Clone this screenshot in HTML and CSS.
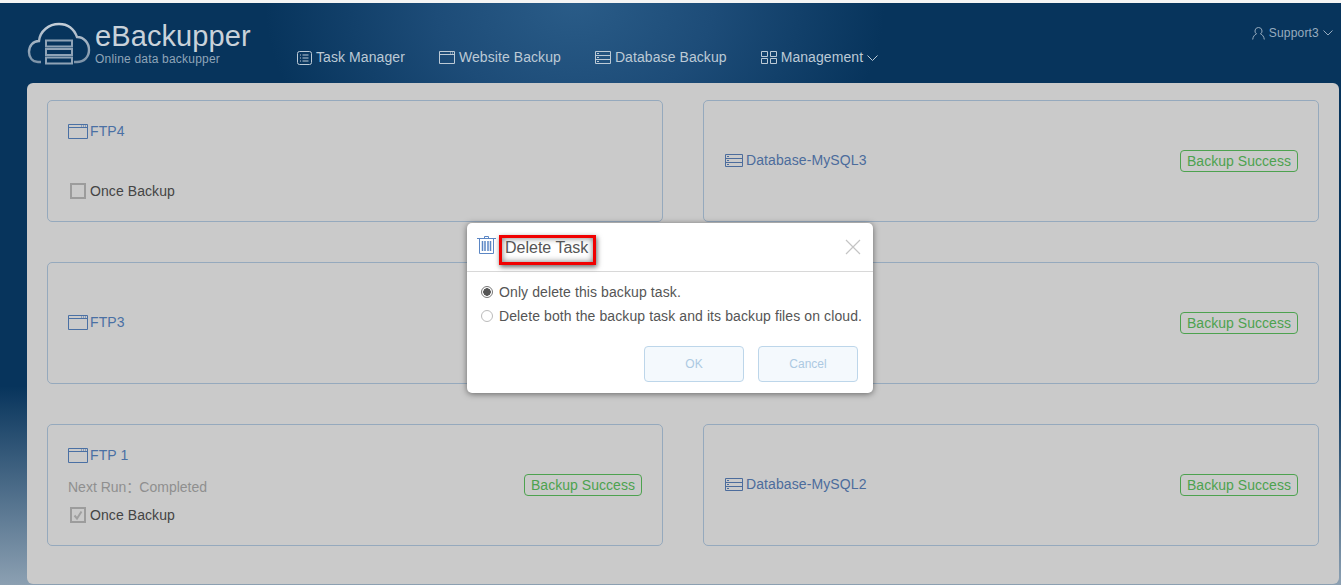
FILE: index.html
```
<!DOCTYPE html>
<html lang="en">
<head>
    <meta charset="UTF-8">
    <title>eBackupper</title>
    <link rel="stylesheet" href="styles.css">
</head>
<body>
    <svg class="sprites" width="0" height="0">
        <symbol id="i-site" viewBox="0 0 20 15">
            <path d="M.5.5h19v14H.5zM.5 3.500h19M13 2h1M15 2h1M17 2h1" fill="none" stroke="currentColor"/>
        </symbol>
        <symbol id="i-db" viewBox="0 0 18 13">
            <path d="M.5.5h17v12H.5zM.5 4.500h17M.5 8.500h17M2 2.500h2M2 6.500h2M2 10.500h2" fill="none" stroke="currentColor"/>
        </symbol>
    </svg>

    <header class="topbar">
        <div class="logo">
            <svg class="logo-icon" width="64" height="44" viewBox="0 0 64 44">
                <defs>
                    <linearGradient id="cloud" x1="0" y1="0" x2="0" y2="1">
                        <stop offset="0" stop-color="#c4ced8"/>
                        <stop offset="1" stop-color="#7d93a8"/>
                    </linearGradient>
                </defs>
                <path d="M14 40H11C5 40 2 35 2 30C2 24 6 19 12 19C13 9 22 2 32 2C41 2 47 7 50 15C57 15 62 21 62 28C62 35 57 40 50 40H47" fill="none" stroke="url(#cloud)" stroke-width="2.4"/>
                <path d="M19 18.500h26v6H19zM19 27h26v6H19zM19 35.500h26v6H19z" fill="none" stroke="#8fa3b6" stroke-width="2"/>
            </svg>
            <div class="logo-text">
                <div class="logo-name">eBackupper</div>
                <div class="logo-sub">Online data backupper</div>
            </div>
        </div>
        <nav class="nav">
            <a class="nav-item">
                <svg width="15" height="14" viewBox="0 0 15 14"><path d="M2.500.5h10a2 2 0 0 1 2 2v9a2 2 0 0 1-2 2h-10a2 2 0 0 1-2-2v-9a2 2 0 0 1 2-2zM3 4h1M3 7h1M3 10h1M5.500 4h6M5.500 7h6M5.500 10h6" fill="none" stroke="currentColor"/></svg>
                Task Manager
            </a>
            <a class="nav-item">
                <svg width="16" height="13" viewBox="0 0 16 13"><path d="M.5.5h15v12H.5zM.5 3.500h15M11 2h1M13 2h1" fill="none" stroke="currentColor"/></svg>
                Website Backup
            </a>
            <a class="nav-item">
                <svg width="16" height="13" viewBox="0 0 16 13"><path d="M.5.5h15v12H.5zM.5 4.500h15M.5 8.500h15M2 2.500h2M2 6.500h2M2 10.500h2" fill="none" stroke="currentColor"/></svg>
                Database Backup
            </a>
            <a class="nav-item">
                <svg width="16" height="13" viewBox="0 0 16 13"><path d="M.5.5h6v5h-6zM9.500.5h6v5h-6zM.5 7.500h6v5h-6zM9.500 7.500h6v5h-6z" fill="none" stroke="currentColor"/></svg>
                Management
                <svg class="chev" width="11" height="6" viewBox="0 0 11 6"><path d="M.5.5l5 5 5-5" fill="none" stroke="currentColor"/></svg>
            </a>
        </nav>
        <div class="user">
            <svg width="13" height="13" viewBox="0 0 13 13"><path d="M6.500.5a3.500 3.500 0 0 1 2 6.400c2 .7 3.500 2.800 3.800 5.600M6.500.5a3.500 3.500 0 0 0-2 6.400C2.500 7.600 1 9.700.7 12.500" fill="none" stroke="currentColor"/></svg>
            Support3
            <svg class="chev" width="10" height="6" viewBox="0 0 10 6"><path d="M.5.5L5 5 9.500.5" fill="none" stroke="currentColor"/></svg>
        </div>
    </header>

    <main class="panel">
        <section class="card">
            <div class="card-title"><svg width="20" height="15"><use href="#i-site"/></svg>FTP4</div>
            <div class="card-spacer"></div>
            <label class="once"><span class="check"></span>Once Backup</label>
        </section>
        <section class="card card-row">
            <div class="card-title title-db"><svg width="18" height="13"><use href="#i-db"/></svg>Database-MySQL3</div>
            <span class="status">Backup Success</span>
        </section>

        <section class="card card-row">
            <div class="card-title"><svg width="20" height="15"><use href="#i-site"/></svg>FTP3</div>
        </section>
        <section class="card card-row card-end">
            <span class="status">Backup Success</span>
        </section>

        <section class="card">
            <div class="card-title"><svg width="20" height="15"><use href="#i-site"/></svg>FTP 1</div>
            <div class="next-run">Next Run：<span class="next-val">Completed</span></div>
            <label class="once"><span class="check"><svg width="12" height="12" viewBox="0 0 12 12"><path d="M2.500 6.500l2.500 3 4.500-7" fill="none" stroke="#a0a0a0" stroke-width="2"/></svg></span>Once Backup</label>
            <span class="status status-over">Backup Success</span>
        </section>
        <section class="card card-row">
            <div class="card-title title-db"><svg width="18" height="13"><use href="#i-db"/></svg>Database-MySQL2</div>
            <span class="status">Backup Success</span>
        </section>
    </main>

    <div class="modal">
        <div class="modal-head">
            <svg class="trash" width="19" height="18" viewBox="0 0 19 18"><path d="M0 2.500h19M7.500 2V.5h4V2M2.500 3v14.500h14V3" fill="none" stroke="#5b86c4"/><path d="M5.500 5v10M8 5v10M11 5v10M13.500 5v10" fill="none" stroke="#5b86c4" stroke-width="1.500"/></svg>
            <span class="modal-title">Delete Task</span>
            <svg class="close" width="16" height="16" viewBox="0 0 16 16"><path d="M1 1l14 14M15 1L1 15" fill="none" stroke="#c4c4c4" stroke-width="1.200"/></svg>
        </div>
        <div class="modal-body">
            <label class="radio-row"><span class="radio radio-on"></span>Only delete this backup task.</label>
            <label class="radio-row"><span class="radio"></span>Delete both the backup task and its backup files on cloud.</label>
        </div>
        <div class="modal-foot">
            <button class="btn">OK</button>
            <button class="btn">Cancel</button>
        </div>
    </div>
</body>
</html>
```

FILE: styles.css
```
* {
    box-sizing: border-box;
}

html, body {
    height: 100%;
}

body {
    margin: 0;
    height: 585px;
    overflow: hidden;
    position: relative;
    border-top: 3px solid #f4f4f4;
    font-family: 'Liberation Sans', Arial, 'Noto Sans CJK SC', sans-serif;
    font-size: 14px;
    background-color: #07345c;
    background-image:
        radial-gradient(ellipse 310px 240px at 575px 0, #2a5c88 0%, #1d4c78 45%, rgba(7, 52, 92, 0) 100%),
        linear-gradient(to bottom, rgba(140, 160, 178, 0) 66%, #8ca0b2 100%);
}

.sprites {
    position: absolute;
}

/* top bar */
.topbar {
    height: 80px;
    margin: 0 2px 0 27px;
    display: flex;
    position: relative;
}

.logo {
    display: flex;
    padding-top: 17px;
    width: 270px;
}

.logo-icon {
    margin-top: 2px;
    margin-right: 4px;
}

.logo-name {
    font-size: 29px;
    line-height: 32px;
    letter-spacing: 0.1px;
    color: #c9d2da;
}

.logo-sub {
    font-size: 12px;
    line-height: 13px;
    margin-top: 1px;
    letter-spacing: 0.2px;
    color: #8fa5b9;
}

.nav {
    display: flex;
    gap: 34px;
    padding-top: 46px;
}

.nav-item {
    display: flex;
    align-items: flex-start;
    gap: 4px;
    font-size: 14px;
    line-height: 16px;
    letter-spacing: 0.08px;
    color: #bccad6;
    white-space: nowrap;
}

.nav-item svg {
    margin-top: 2px;
}

.nav-item .chev {
    margin-top: 6px;
}

.user {
    position: absolute;
    right: 6px;
    top: 23px;
    display: flex;
    align-items: center;
    gap: 4px;
    font-size: 12px;
    line-height: 14px;
    letter-spacing: 0.2px;
    color: #98acbf;
}

/* main panel */
.panel {
    margin: 0 2px 0 27px;
    height: 501px;
    padding: 17px 20px 0;
    background: #cacaca;
    border-radius: 6px;
    display: grid;
    grid-template-columns: 616px 616px;
    grid-auto-rows: 122px;
    column-gap: 40px;
    row-gap: 40px;
}

.card {
    position: relative;
    border: 1px solid #95a9bd;
    border-radius: 5px;
    padding: 21px 20px 0;
}

.card-row {
    display: flex;
    align-items: center;
    justify-content: space-between;
    padding: 0 20px;
}

.card-end {
    justify-content: flex-end;
}

.card-title {
    display: flex;
    align-items: center;
    gap: 2px;
    font-size: 14px;
    line-height: 18px;
    letter-spacing: 0.1px;
    color: #4a70a4;
}

.card-row .card-title {
    margin-top: -2px;
}

.title-db {
    gap: 3px;
    margin-left: 1px;
    color: #4c6c9c;
}

.card-spacer {
    height: 33px;
}

.next-run {
    margin-top: 14px;
    height: 18px;
    line-height: 18px;
    color: #8f8f8f;
}

.next-val {
    margin-left: -1px;
}

.once {
    display: flex;
    align-items: center;
    margin: 9px 0 0 2px;
    line-height: 18px;
    letter-spacing: 0.08px;
    color: #444;
}

.next-run + .once {
    margin-top: 10px;
}

.check {
    width: 16px;
    height: 16px;
    margin-right: 4px;
    border: 2px solid #9c9c9c;
    display: flex;
    align-items: center;
    justify-content: center;
}

.status {
    height: 22px;
    padding: 0 6px;
    border: 1px solid #4da24f;
    border-radius: 4px;
    font-size: 14px;
    line-height: 20px;
    letter-spacing: 0.04px;
    color: #4da24f;
    white-space: nowrap;
}

.status-over {
    position: absolute;
    right: 20px;
    top: 49px;
}

/* dialog */
.modal {
    position: absolute;
    left: 467px;
    top: 220px;
    width: 406px;
    height: 170px;
    background: #fff;
    border-radius: 5px;
    box-shadow: 0 1px 6px rgba(0, 0, 0, 0.5);
    color: #555;
}

.modal-head {
    height: 49px;
    border-bottom: 1px solid #d8d8d8;
    display: flex;
    align-items: flex-start;
    padding: 13px 12px 0 10px;
}

.trash {
    margin-right: 3px;
}

.modal-title {
    margin-top: -1px;
    padding: 0 5px 4px 3px;
    font-size: 16px;
    line-height: 20px;
    border: 3px solid #f00000;
    box-shadow: 1px 2px 5px rgba(0, 0, 0, 0.6), inset 0 0 6px rgba(0, 0, 0, 0.55);
    color: #555;
}

.close {
    margin: 3px 0 0 auto;
}

.modal-body {
    padding: 8px 14px 0;
}

.radio-row {
    display: flex;
    align-items: center;
    height: 24px;
    font-size: 14px;
    letter-spacing: 0.1px;
    white-space: nowrap;
}

.radio {
    flex: none;
    width: 12px;
    height: 12px;
    margin-right: 6px;
    border: 1px solid #bbb;
    border-radius: 50%;
}

.radio-on {
    border-color: #777;
    background: radial-gradient(circle, #555 0, #555 3.500px, #fff 4px);
}

.modal-foot {
    display: flex;
    justify-content: flex-end;
    gap: 14px;
    padding: 18px 15px 0 0;
}

.btn {
    width: 100px;
    height: 36px;
    font-family: inherit;
    font-size: 12px;
    color: #acc9e2;
    background: #f4f9fd;
    border: 1px solid #bdd6ea;
    border-radius: 4px;
}
```
